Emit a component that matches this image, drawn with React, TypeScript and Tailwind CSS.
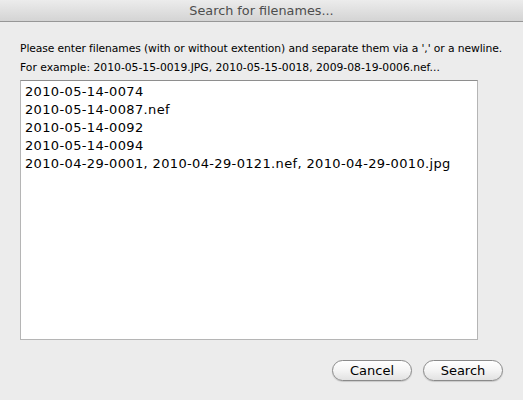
const lines = [
  '2010-05-14-0074',
  '2010-05-14-0087.nef',
  '2010-05-14-0092',
  '2010-05-14-0094',
  '2010-04-29-0001, 2010-04-29-0121.nef, 2010-04-29-0010.jpg',
]

function PillButton({ label }: { label: string }) {
  return (
    <button className="flex h-[21px] w-[80px] items-center justify-center rounded-full border border-[#8a8a8a] bg-gradient-to-b from-white via-[#f4f4f4] to-[#e2e2e2] text-[13px] text-black shadow-[0_1px_1px_rgba(0,0,0,0.15)]">
      {label}
    </button>
  )
}

export default function App() {
  return (
    <div className="flex h-[400px] w-[523px] flex-col bg-[#ececec] font-['DejaVu_Sans',sans-serif] text-black">
      <div className="flex h-[22px] shrink-0 items-center justify-center border-b border-[#979797] bg-gradient-to-b from-[#ececec] to-[#d4d4d4] text-[12.8px] text-[#4d4d4d]">
        Search for filenames...
      </div>
      <div className="flex flex-1 flex-col px-5 pt-[17px]">
        <p className="whitespace-nowrap text-[10.75px] leading-[19px] tracking-[-0.1px]">
          Please enter filenames (with or without extention) and separate them via a ',' or a newline.
        </p>
        <p className="whitespace-nowrap text-[10.75px] leading-[19px]">
          For example: 2010-05-15-0019.JPG, 2010-05-15-0018, 2009-08-19-0006.nef...
        </p>
        <div className="mt-[3px] h-[260px] w-[458px] border border-[#b5b5b5] border-t-[#8e8e8e] bg-white px-1 pt-[2px]">
          {lines.map((l) => (
            <div key={l} className="text-[13px] leading-[18px] tracking-[0.35px]">
              {l}
            </div>
          ))}
        </div>
        <div className="mt-[20px] flex justify-end gap-[11px]">
          <PillButton label="Cancel" />
          <PillButton label="Search" />
        </div>
      </div>
    </div>
  )
}
